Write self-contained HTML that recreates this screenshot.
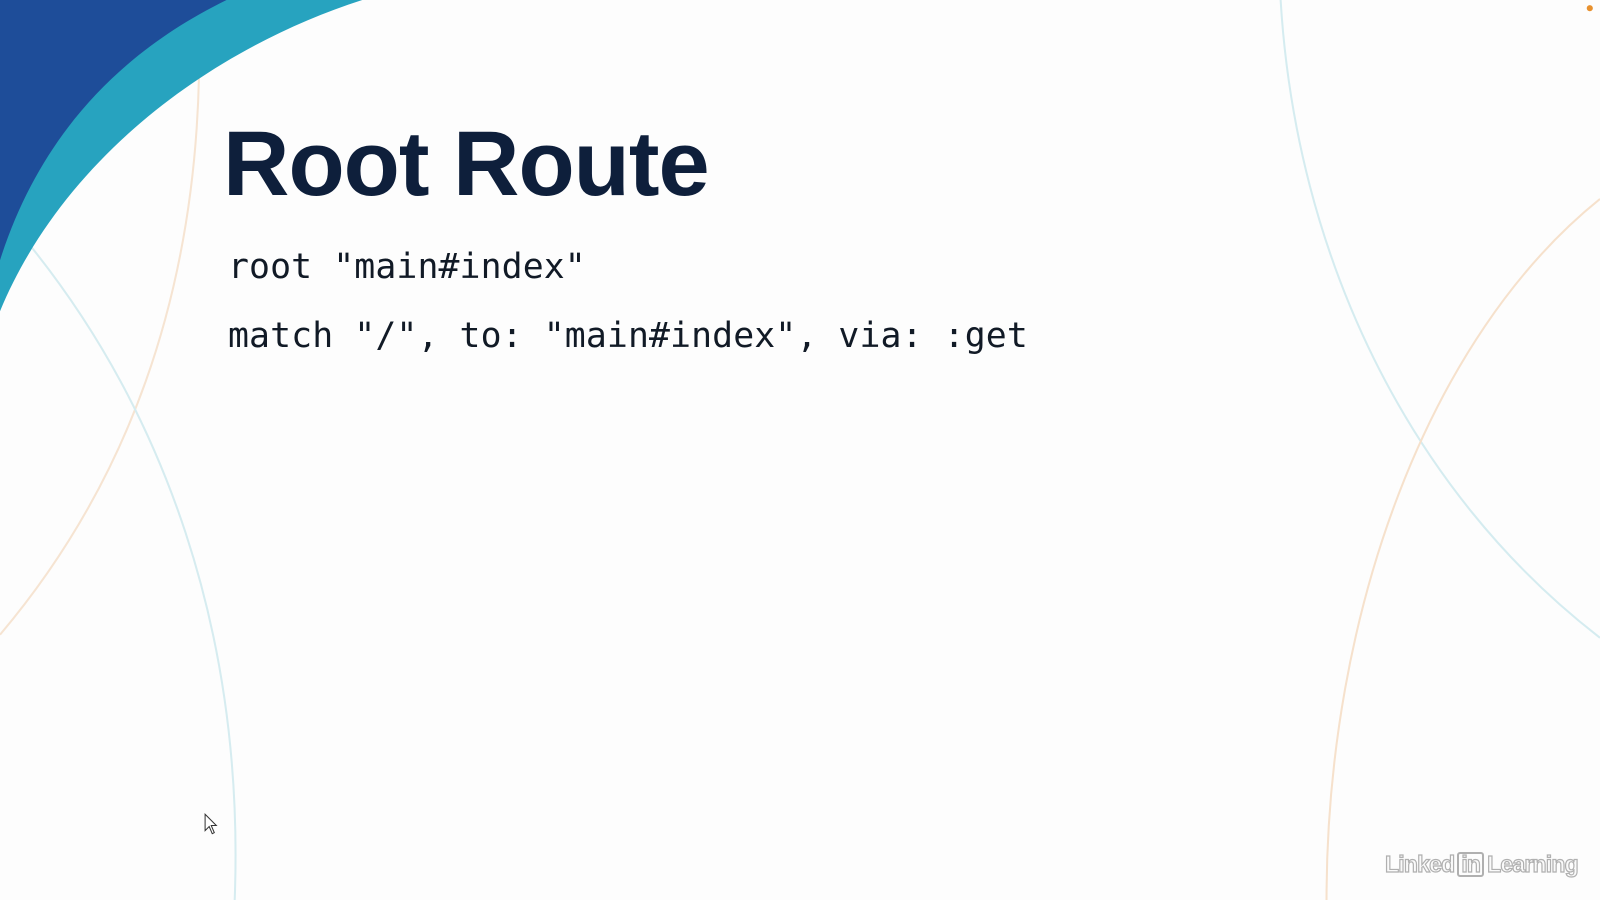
<!DOCTYPE html>
<html><head><meta charset="utf-8"><style>
html,body{margin:0;padding:0;width:1600px;height:900px;overflow:hidden;background:#fdfdfd}
svg.bg{position:absolute;left:0;top:0}
h1{position:absolute;left:223px;top:118px;margin:0;font-family:"Liberation Sans",sans-serif;font-weight:bold;font-size:92px;color:#0e1f3b;letter-spacing:-1px;line-height:1}
.code{position:absolute;left:228px;font-family:"DejaVu Sans Mono","Liberation Mono",monospace;font-size:34.8px;color:#111a26;white-space:pre;line-height:1;letter-spacing:0.1px}
.li{position:absolute;left:1385px;top:851px;font-family:"Liberation Sans",sans-serif;font-weight:bold;font-size:23px;color:#fafafa;-webkit-text-stroke:1.2px #b0b0b0;letter-spacing:-0.8px}
.li span{display:inline-block;border:2px solid #b0b0b0;border-radius:3px;padding:0 2px;margin:0 3px;line-height:21px}
</style></head><body>
<svg class="bg" width="1600" height="900" viewBox="0 0 1568 882" preserveAspectRatio="none">
<path d="M1255 0 C1270 250 1380 480 1568 625" fill="none" stroke="#d5ecf0" stroke-width="2"/>
<path d="M1568 195 C1400 330 1300 600 1300 882" fill="none" stroke="#f6e1cc" stroke-width="2"/>
<path d="M195 75 C190 300 120 480 0 622" fill="none" stroke="#f6e4d2" stroke-width="2"/>
<path d="M25 235 C160 400 240 620 230 882" fill="none" stroke="#d6ecf0" stroke-width="2"/>
<path d="M0 0 L355 0 C200 50 60 160 0 305 Z" fill="#27a3bf"/>
<path d="M0 0 L222 0 C120 50 40 130 0 255 Z" fill="#1e4d99"/>
<circle cx="1558" cy="8" r="3" fill="#e8912e"/>
<path d="M201 798 L201 814 L205 810 L208 817 L210 816 L207 809 L212 809 Z" fill="#fff" stroke="#333" stroke-width="1"/>
</svg>
<h1>Root Route</h1>
<div class="code" style="top:250px">root "main#index"</div>
<div class="code" style="top:319px">match "/", to: "main#index", via: :get</div>
<div class="li">Linked<span>in</span>Learning</div>
</body></html>
